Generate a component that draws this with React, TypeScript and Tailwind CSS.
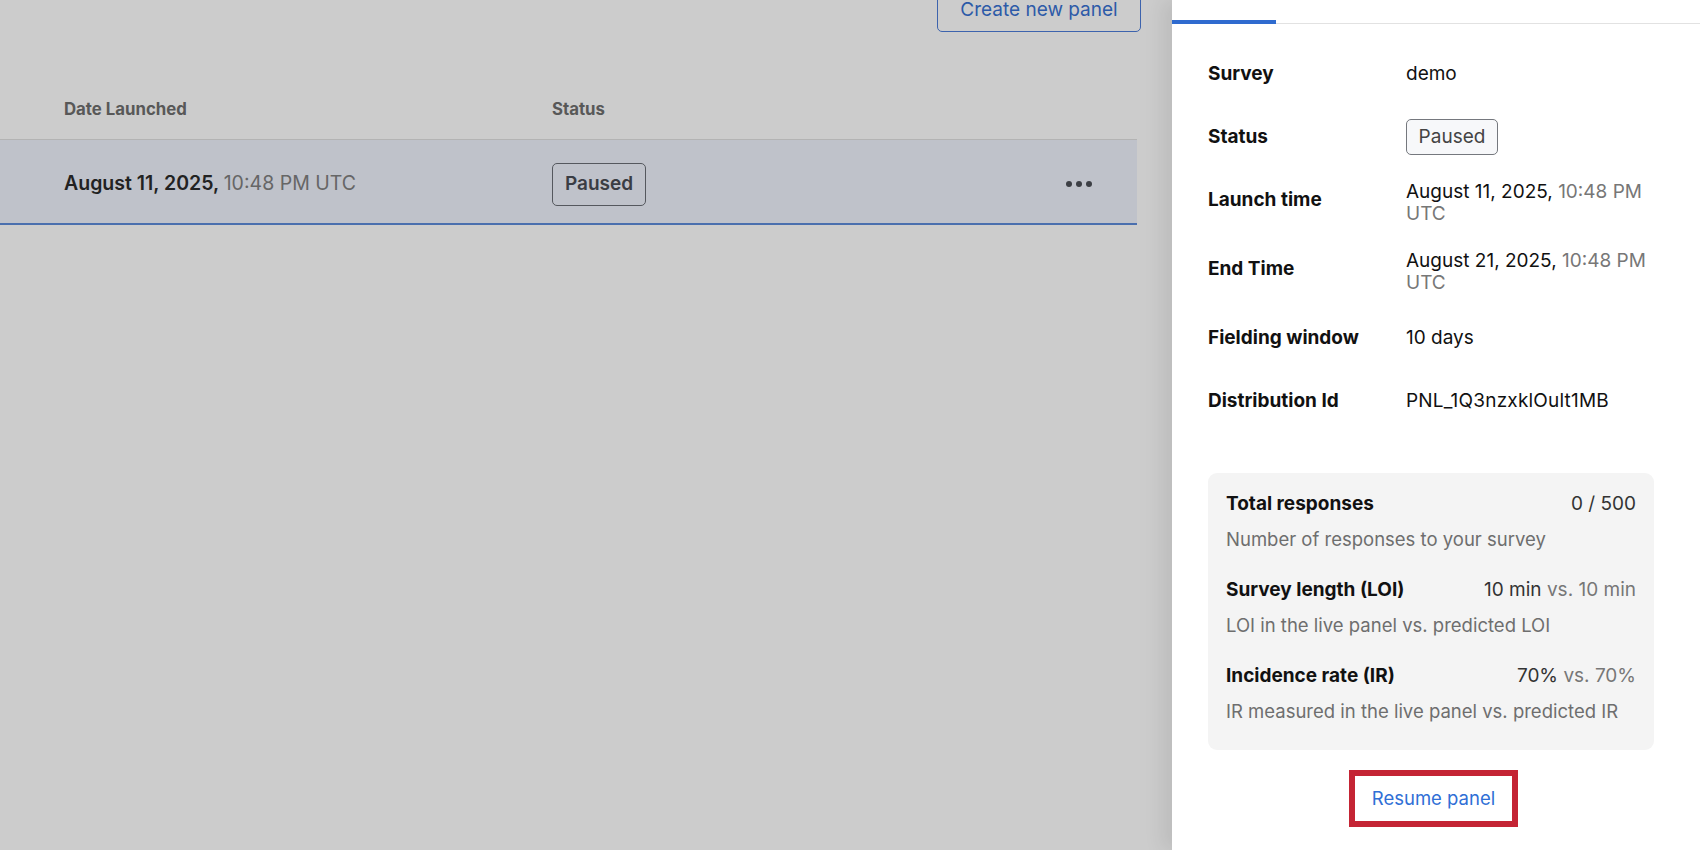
import React from "react";

const font = { fontFamily: "Inter, 'Noto Sans', sans-serif" };

function DetailRow({
  label,
  children,
  h,
  two = false,
}: {
  label: string;
  children: React.ReactNode;
  h: string;
  two?: boolean;
}) {
  return (
    <div className={`flex items-center ${h}`}>
      <div className="w-[198px] shrink-0 text-[19px] font-bold text-[#111111] leading-[22px]">{label}</div>
      <div className={`text-[19px] leading-[22px] text-[#111111] ${two ? "pt-[6px]" : ""}`}>{children}</div>
    </div>
  );
}

function StatBlock({
  title,
  value,
  desc,
  first = false,
}: {
  title: string;
  value: React.ReactNode;
  desc: string;
  first?: boolean;
}) {
  return (
    <div className={first ? "" : "mt-[29px]"}>
      <div className="flex justify-between items-center leading-[22px] text-[19px]">
        <span className="font-bold text-[#111111]">{title}</span>
        <span className="text-[#333333]">{value}</span>
      </div>
      <div className="mt-[13px] leading-[22px] text-[18.5px] text-[#6e6e6e]">{desc}</div>
    </div>
  );
}

export default function App() {
  return (
    <div className="flex w-[1700px] h-[850px] overflow-hidden bg-[#cccccc]" style={font}>
      {/* main area */}
      <div className="flex-1 flex flex-col">
        <div className="flex justify-end pr-[31px]">
          <button className="-mt-[12px] h-[44px] w-[204px] rounded-[5px] border border-[#3d63ad] text-[19px] text-[#2d5aa8] flex items-center justify-center">
            Create new panel
          </button>
        </div>
        <div className="w-[1137px] mt-[46px]">
          <div className="flex items-center h-[62px] pt-[2px] border-b border-[#b3b3b3] pl-[64px] text-[16.8px] font-bold text-[#585858]">
            <div className="w-[488px]">Date Launched</div>
            <div>Status</div>
          </div>
          <div className="flex items-center h-[85px] pt-[5px] bg-[#bfc2ca] border-b-2 border-[#4a6fae] pl-[64px] pr-[45px]">
            <div className="w-[488px] text-[19.5px] font-semibold text-[#222222]">
              August 11, 2025, <span className="font-normal text-[#666666]">10:48 PM UTC</span>
            </div>
            <div className="h-[43px] w-[94px] rounded-[5px] border-[1.5px] border-[#55585e] flex items-center justify-center text-[19px] font-semibold text-[#3a3d44]">
              Paused
            </div>
            <div className="ml-auto flex gap-[4px]">
              <span className="w-[6px] h-[6px] rounded-full bg-[#3d3f45]" />
              <span className="w-[6px] h-[6px] rounded-full bg-[#3d3f45]" />
              <span className="w-[6px] h-[6px] rounded-full bg-[#3d3f45]" />
            </div>
          </div>
        </div>
      </div>

      {/* side panel */}
      <div className="w-[528px] shrink-0 bg-white h-full shadow-[-10px_0_18px_rgba(0,0,0,0.08)] flex flex-col">
        <div className="h-[24px] border-b border-[#e2e2e2] flex">
          <div className="w-[104px] h-[24px] -mb-px border-b-[4px] border-[#2f6bcf]" />
        </div>
        <div className="pl-[36px] mt-[18px]">
          <DetailRow label="Survey" h="h-[63px]">demo</DetailRow>
          <DetailRow label="Status" h="h-[63px]">
            <div className="h-[36px] w-[92px] rounded-[5px] border border-[#75787e] bg-[#f7f8fa] flex items-center justify-center text-[#444444]">
              Paused
            </div>
          </DetailRow>
          <DetailRow label="Launch time" h="h-[63px]" two>
            August 11, 2025, <span className="text-[#777777]">10:48 PM</span>
            <br />
            <span className="text-[#777777]">UTC</span>
          </DetailRow>
          <DetailRow label="End Time" h="h-[75px]" two>
            August 21, 2025, <span className="text-[#777777]">10:48 PM</span>
            <br />
            <span className="text-[#777777]">UTC</span>
          </DetailRow>
          <DetailRow label="Fielding window" h="h-[63px]">10 days</DetailRow>
          <DetailRow label="Distribution Id" h="h-[63px]">
            <span className="tracking-[0.2px]">PNL_1Q3nzxklOult1MB</span>
          </DetailRow>
        </div>
        <div className="ml-[36px] mt-[41px] w-[446px] rounded-[9px] bg-[#f4f4f4] pt-[20px] pb-[28px] px-[18px]">
          <StatBlock first title="Total responses" value="0 / 500" desc="Number of responses to your survey" />
          <StatBlock
            title="Survey length (LOI)"
            value={
              <>
                10 min <span className="text-[#777777]">vs. 10 min</span>
              </>
            }
            desc="LOI in the live panel vs. predicted LOI"
          />
          <StatBlock
            title="Incidence rate (IR)"
            value={
              <>
                70% <span className="text-[#777777]">vs. 70%</span>
              </>
            }
            desc="IR measured in the live panel vs. predicted IR"
          />
        </div>
        <div className="ml-[177px] mt-[20px] w-[169px] h-[57px] border-[6px] border-[#c42434] flex items-center justify-center text-[18.5px] text-[#2f6fd6]">
          Resume panel
        </div>
      </div>
    </div>
  );
}
